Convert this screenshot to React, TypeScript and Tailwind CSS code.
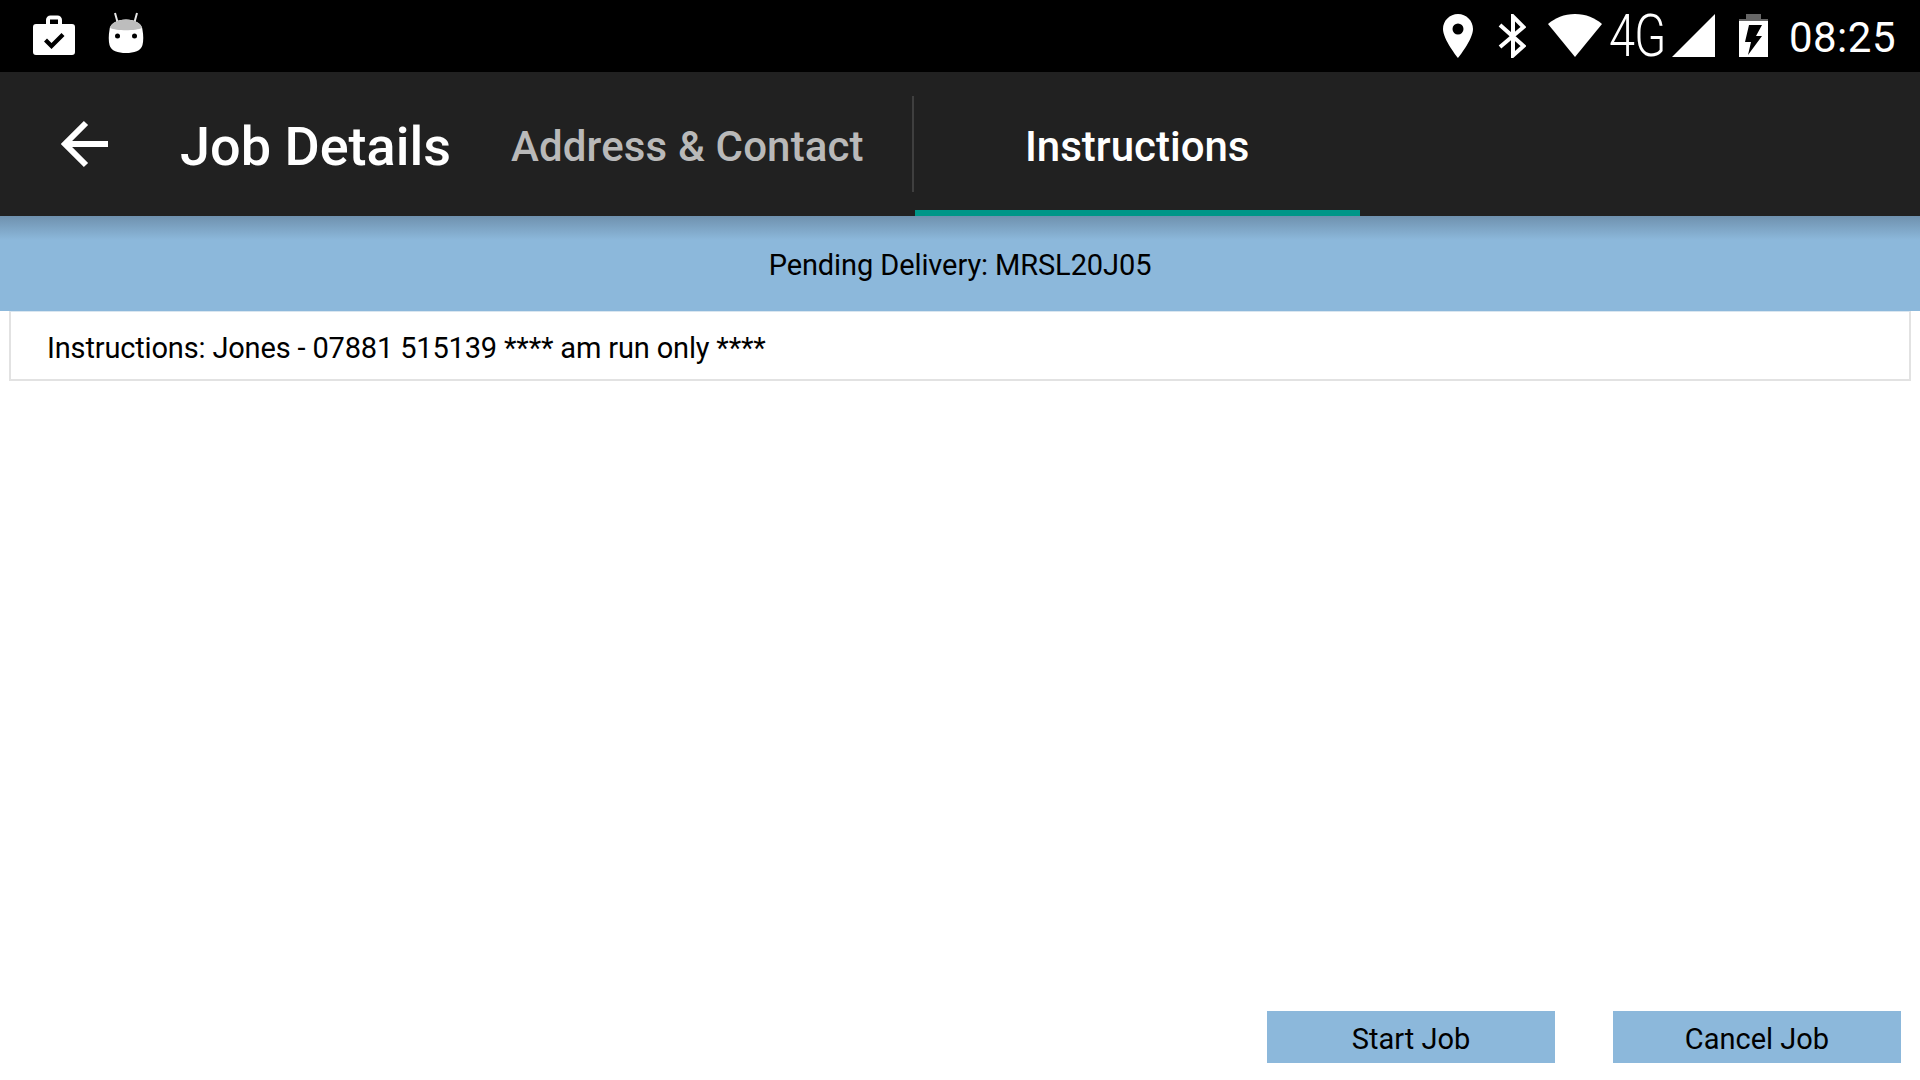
const ROBOTO = "font-['Roboto',sans-serif]";

function Briefcase() {
  return (
    <svg width="42" height="40" viewBox="0 0 42 40" fill="white">
      <path fillRule="evenodd" d="M13 9V5a4.500 4.500 0 0 1 4.500-4.500h7A4.500 4.500 0 0 1 29 5v4h10a3 3 0 0 1 3 3v25a3 3 0 0 1-3 3H3a3 3 0 0 1-3-3V12a3 3 0 0 1 3-3zM17 4.500V9h8V4.500z" />
      <path d="M11 26.500l3-3 4.500 4.500 10-10 3 3-13 13z" fill="black" />
    </svg>
  );
}

function Marshmallow() {
  return (
    <svg width="36" height="42" viewBox="0 0 36 42">
      <path d="M7 1l2.500 9M29 1l-2.500 9" stroke="#e8e8e8" strokeWidth="2" fill="none" />
      <path d="M1.500 18C1.500 12 9 7.500 18 7.500S34.500 12 34.500 18c1 5 1 11 0 15C33 39 26 41 18 41S3 39 1.500 33c-1-4-1-10 0-15z" fill="white" />
      <path d="M2 16C3 11 10 7.500 18 7.500S33 11 34 16C28 19 8 19 2 16z" fill="#bdbdbd" />
      <circle cx="9.500" cy="24" r="2.500" fill="black" />
      <circle cx="26.500" cy="24" r="2.500" fill="black" />
    </svg>
  );
}

function Pin() {
  return (
    <svg width="30" height="44" viewBox="0 0 30 44" fill="white">
      <path fillRule="evenodd" d="M15 0C6.700 0 0 6.700 0 15c0 10.500 15 29 15 29s15-18.500 15-29C30 6.700 23.300 0 15 0zm0 20.500a5.500 5.500 0 1 1 0-11 5.500 5.500 0 0 1 0 11z" />
    </svg>
  );
}

function Bluetooth() {
  return (
    <svg width="28" height="44" viewBox="0 0 28 44" fill="none" stroke="white" strokeWidth="4">
      <path d="M2 11L25.500 32 15 41.500V2.500L25.500 13 2 33" />
    </svg>
  );
}

function Wifi() {
  return (
    <svg width="54" height="43" viewBox="0 0 54 43" fill="white">
      <path d="M27 43L0 10C7 4 16 0 27 0s20 4 27 10z" />
    </svg>
  );
}

function Signal() {
  return (
    <svg width="43" height="43" viewBox="0 0 43 43" fill="white">
      <path d="M43 0v43H0z" />
    </svg>
  );
}

function Battery() {
  return (
    <svg width="29" height="44" viewBox="0 0 29 44">
      <path d="M7 0h15v5H7zM0 5h29v2H0z" fill="#666666" />
      <path d="M0 7h29v36H0z" fill="white" />
      <path d="M10 11h13l-6 11h6L9 41l3-13H6z" fill="black" />
    </svg>
  );
}

function BackArrow() {
  return (
    <svg width="48" height="48" viewBox="0 0 48 48" fill="none" stroke="white" strokeWidth="6" className="shrink-0">
      <path d="M48 24H6M26 3L5 24l21 21" />
    </svg>
  );
}

function StatusBar() {
  return (
    <div className="flex h-[72px] shrink-0 items-start bg-black text-white">
      <div className="ml-[33px] mt-[15px]"><Briefcase /></div>
      <div className="ml-[33px] mt-[12px]"><Marshmallow /></div>
      <div className="flex-1" />
      <div className="mt-[14px]"><Pin /></div>
      <div className="ml-[25px] mt-[14px]"><Bluetooth /></div>
      <div className="ml-[22px] mt-[14px]"><Wifi /></div>
      <span className={`${ROBOTO} ml-[7px] mt-[6px] w-[58px] origin-left scale-x-[0.78] text-[60px] leading-[60px] font-light tracking-[-1px]`}>4G</span>
      <div className="ml-[5px] mt-[14px]"><Signal /></div>
      <div className="ml-[24px] mt-[14px]"><Battery /></div>
      <span className={`${ROBOTO} ml-[21px] mr-[24px] mt-[14px] text-[42px] leading-[48px] tracking-[0.5px]`}>08:25</span>
    </div>
  );
}

function AppBar() {
  return (
    <div className="flex h-[144px] shrink-0 items-center bg-[#212121]">
      <div className="ml-[60px]"><BackArrow /></div>
      <h1 className={`${ROBOTO} ml-[72px] mt-[5px] text-[54px] leading-[60px] font-medium text-white`}>Job Details</h1>
      <span className={`${ROBOTO} ml-[60px] mt-[5px] text-[42px] leading-[48px] font-medium tracking-[0.14px] text-[#b9b9b9]`}>Address &amp; Contact</span>
      <div className="ml-[48px] h-[96px] w-[2px] bg-[#3f3f3f]" />
      <div className="relative ml-[1px] flex h-full w-[445px] items-center justify-center">
        <span className={`${ROBOTO} mt-[5px] text-[42px] leading-[48px] font-medium text-white`}>Instructions</span>
        <div className="absolute inset-x-0 bottom-0 h-[6px] bg-[#009688]" />
      </div>
    </div>
  );
}

export default function App() {
  return (
    <div className={`${ROBOTO} flex h-[1080px] w-[1920px] flex-col overflow-hidden bg-white text-black`}>
      <StatusBar />
      <AppBar />
      {/* the gradient stands in for the app bar's drop shadow */}
      <div className="flex h-[95px] shrink-0 items-center justify-center bg-[linear-gradient(#6f91ae,#8cb8db_24px)] pt-[3px] text-[29px] leading-[36px] tracking-[-0.1px]">
        Pending Delivery: MRSL20J05
      </div>
      <div className="mx-[9px] flex h-[70px] shrink-0 items-center border-2 border-t border-[#e2e2e2] border-t-[#d9e6f0] pl-[36px] pt-[4px] text-[29px] leading-[36px] tracking-[-0.16px]">
        Instructions: Jones - 07881 515139 **** am run only ****
      </div>
      <div className="flex-1" />
      <div className="mb-[17px] mr-[19px] flex justify-end gap-[58px]">
        <button className="h-[52px] w-[288px] bg-[#8cb8db] pt-[4px] text-[29px] leading-[36px]">Start Job</button>
        <button className="h-[52px] w-[288px] bg-[#8cb8db] pt-[4px] text-[29px] leading-[36px]">Cancel Job</button>
      </div>
    </div>
  );
}
